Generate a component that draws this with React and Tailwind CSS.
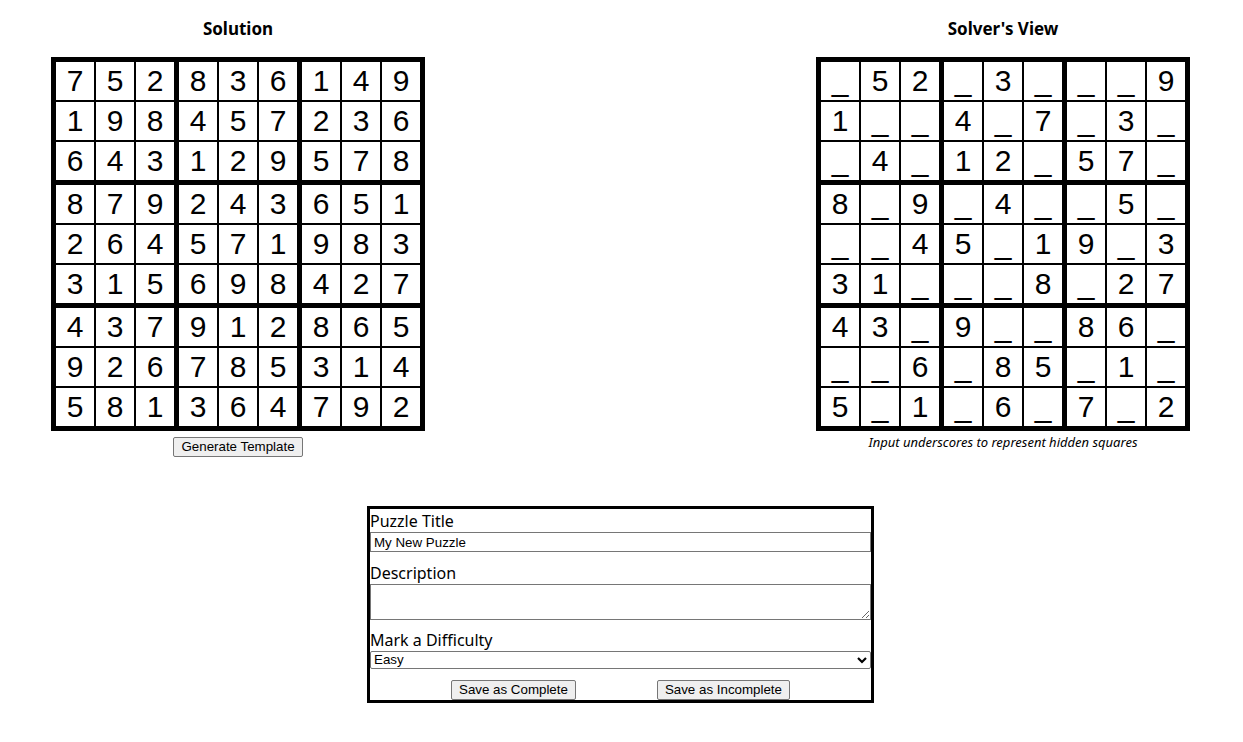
import { useState } from "react";

const solution = [
  "752836149",
  "198457236",
  "643129578",
  "879243651",
  "264571983",
  "315698427",
  "437912865",
  "926785314",
  "581364792",
];

const solverView = [
  "_52_3___9",
  "1__4_7_3_",
  "_4_12_57_",
  "8_9_4__5_",
  "__45_19_3",
  "31___8_27",
  "43_9__86_",
  "__6_85_1_",
  "5_1_6_7_2",
];

const uiFont = { fontFamily: '"Noto Sans", "Open Sans", sans-serif' };
const arial = { fontFamily: '"Liberation Sans", Arial, sans-serif' };

const SudokuGrid = ({ rows }) => (
  <div className="w-[374px] border-[5px] border-black bg-black grid grid-cols-3 gap-[5px]">
    {[0, 1, 2, 3, 4, 5, 6, 7, 8].map((b) => (
      <div key={b} className="grid grid-cols-[repeat(3,38px)] gap-[2px]">
        {[0, 1, 2, 3, 4, 5, 6, 7, 8].map((c) => {
          const r = Math.floor(b / 3) * 3 + Math.floor(c / 3);
          const col = (b % 3) * 3 + (c % 3);
          return (
            <div
              key={c}
              className="h-[38px] bg-white text-center text-[30px] leading-[38px] text-black"
              style={arial}
            >
              {rows[r][col]}
            </div>
          );
        })}
      </div>
    ))}
  </div>
);

const Label = ({ children }) => (
  <label className="block text-[16px] leading-[21px] text-black">{children}</label>
);

const App = () => {
  const [title, setTitle] = useState("My New Puzzle");
  const [desc, setDesc] = useState("");
  const [difficulty, setDifficulty] = useState("Easy");

  return (
    <div className="min-h-screen w-full bg-white pt-[17px]" style={uiFont}>
      {/* grids */}
      <div className="flex justify-between items-start pl-[51px] pr-[53px]">
        <div className="w-[374px] flex flex-col items-center">
          <h2 className="text-[17px] leading-[23px] font-bold mb-[17px]">Solution</h2>
          <SudokuGrid rows={solution} />
          <button
            className="mt-[6px] h-[20px] px-[7px] bg-[#efefef] border border-[#767676] rounded-[2px] text-[13.33px] leading-[16px] text-black"
            style={arial}
          >
            Generate Template
          </button>
        </div>

        <div className="w-[374px] flex flex-col items-center">
          <h2 className="text-[17px] leading-[23px] font-bold mb-[17px]">Solver's View</h2>
          <SudokuGrid rows={solverView} />
          <p className="mt-[2px] text-[13px] leading-[18px] italic text-black">
            Input underscores to represent hidden squares
          </p>
        </div>
      </div>

      {/* form */}
      <div className="mt-[49px] flex justify-center pr-[2px]">
        <div className="w-[507px] border-[3px] border-black flex flex-col pt-[2px]">
          <Label>Puzzle Title</Label>
          <input
            value={title}
            onChange={(e) => setTitle(e.target.value)}
            className="h-[20px] w-full border border-[#767676] px-[3px] text-[13.33px] text-black outline-none"
            style={arial}
          />
          <div className="mt-[11px]">
            <Label>Description</Label>
          </div>
          <textarea
            value={desc}
            onChange={(e) => setDesc(e.target.value)}
            className="h-[36px] w-full border border-[#767676] px-[3px] text-[13.33px] outline-none block"
            style={arial}
          />
          <div className="mt-[10px]">
            <Label>Mark a Difficulty</Label>
          </div>
          <div className="relative">
            <select
              value={difficulty}
              onChange={(e) => setDifficulty(e.target.value)}
              className="appearance-none h-[18px] w-full border border-[#767676] rounded-[2px] pl-[3px] text-[13.33px] leading-[16px] text-black outline-none bg-white block"
              style={arial}
            >
              <option>Easy</option>
              <option>Medium</option>
              <option>Hard</option>
            </select>
            <svg
              className="absolute right-[4px] top-[5px] pointer-events-none"
              width="10"
              height="8"
              viewBox="0 0 10 8"
            >
              <path d="M1 2 L5 6 L9 2" fill="none" stroke="black" strokeWidth="2.2" />
            </svg>
          </div>
          <div className="mt-[11px] flex justify-evenly">
            <button
              className="h-[20px] px-[7px] bg-[#efefef] border border-[#767676] rounded-[2px] text-[13.33px] leading-[16px] text-black"
              style={arial}
            >
              Save as Complete
            </button>
            <button
              className="h-[20px] px-[7px] bg-[#efefef] border border-[#767676] rounded-[2px] text-[13.33px] leading-[16px] text-black"
              style={arial}
            >
              Save as Incomplete
            </button>
          </div>
        </div>
      </div>
    </div>
  );
};

export default App;
